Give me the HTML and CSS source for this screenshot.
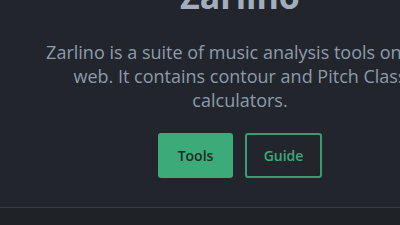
FILE: index.html
```
<!DOCTYPE html>
<html>
<head>
<meta charset="utf-8">
<link rel="stylesheet" href="styles.css">
</head>
<body>
<div class="page">
  <section class="hero">
    <h1 class="title">Zarlino</h1>
    <p class="lead">Zarlino is a suite of music analysis tools on the web. It contains contour and Pitch Class calculators.</p>
    <div class="actions">
      <a class="btn btn-primary">Tools</a>
      <a class="btn btn-outline">Guide</a>
    </div>
  </section>
  <div class="footer"></div>
</div>
</body>
</html>
```
FILE: styles.css
```
html, body {
  margin: 0;
  padding: 0;
  background: #22262c;
  overflow: hidden;
  width: 400px;
  height: 225px;
}
.page {
  width: 480px;
  font-family: "Open Sans", "Noto Sans", sans-serif;
}
.hero {
  display: flex;
  flex-direction: column;
  align-items: center;
  text-align: center;
  height: 207px;
  border-bottom: 1px solid #363b43;
}
.title {
  margin: -26px 0 0 0;
  font-size: 34px;
  line-height: 44px;
  font-weight: 700;
  color: #a3aebd;
}
.lead {
  margin: 22px 0 0 0;
  width: 400px;
  font-size: 18px;
  line-height: 24px;
  color: #8d9bad;
}
.actions {
  display: flex;
  gap: 12px;
  margin-top: 21px;
}
.btn {
  display: flex;
  align-items: center;
  justify-content: center;
  box-sizing: border-box;
  height: 45px;
  border-radius: 3px;
  font-size: 14px;
  font-weight: 600;
}
.btn-primary {
  width: 75px;
  background: #3daa79;
  color: #1c2a24;
}
.btn-outline {
  width: 77px;
  border: 2px solid #3a9d72;
  color: #3daa79;
}
.footer {
  height: 17px;
  background: #1f2328;
}
```
